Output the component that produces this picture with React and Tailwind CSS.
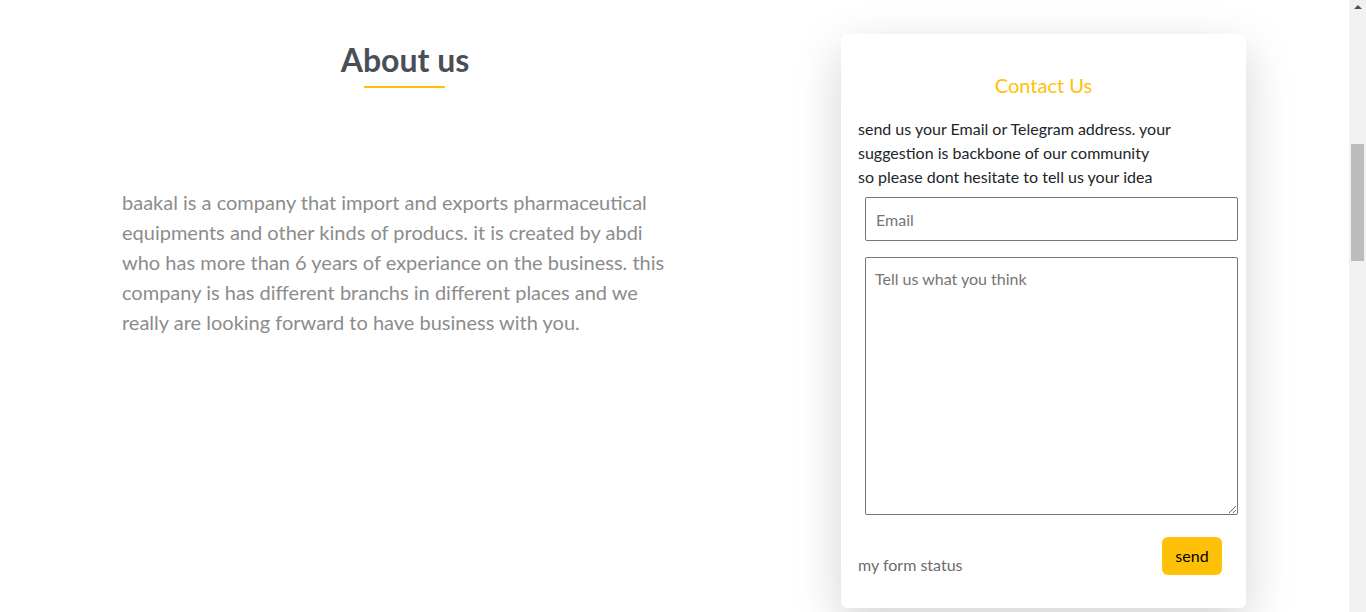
import React from 'react';

const font = { fontFamily: 'Lato, "Noto Sans", sans-serif' };

const ContactCard = () => (
  <div className="ml-[153px] mt-[34px] w-[405px] h-[574px] bg-white rounded-md shadow-[0_16px_48px_rgba(0,0,0,0.175)] px-[17px] pt-[36px]">
    <h2 className="text-center text-[20px] leading-[30px] text-[#ffc107]">Contact Us</h2>
    <p className="mt-[17px] text-[16px] leading-[24px] text-[#212529]">
      send us your Email or Telegram address. your
      <br />
      suggestion is backbone of our community
      <br />
      so please dont hesitate to tell us your idea
    </p>
    <input
      type="email"
      placeholder="Email"
      className="block mt-[8px] ml-[7px] w-[373px] h-[44px] border border-[#767676] rounded-[2px] px-[10px] text-[16px] placeholder:text-[#757575] outline-none"
    />
    <textarea
      placeholder="Tell us what you think"
      className="block mt-[16px] ml-[7px] w-[373px] h-[258px] border border-[#767676] rounded-[2px] px-[9px] pt-[9px] text-[16px] placeholder:text-[#757575] outline-none"
    />
    <div className="mt-[22px] flex justify-between items-start pr-[7px]">
      <span className="mt-[16px] text-[16px] leading-[24px] text-[#6c6c6c]">my form status</span>
      <button className="w-[60px] h-[38px] bg-[#ffc107] rounded-md text-[16px] text-black">send</button>
    </div>
  </div>
);

const App = () => {
  return (
    <div className="flex w-[1366px] h-[612px] overflow-hidden bg-white" style={font}>
      <div className="flex flex-1 items-start">
        <div className="ml-[122px] w-[566px]">
          <h1 className="pt-[40px] text-center text-[32px] leading-[40px] font-bold text-[#4a4f57]">About us</h1>
          <div className="mt-[6px] ml-[242px] w-[81px] h-[2px] bg-[#ffc107]" />
          <p className="mt-[99px] w-[555px] text-[20px] leading-[30px] text-[#8c8c8c]">
            baakal is a company that import and exports pharmaceutical equipments and other kinds of producs. it is created by abdi who has more than 6 years of experiance on the business. this company is has different branchs in different places and we really are looking forward to have business with you.
          </p>
        </div>
        <ContactCard />
      </div>
      <div className="w-[17px] h-full bg-[#f1f1f1] flex flex-col items-center">
        <div className="mt-[5px] w-0 h-0 border-l-[4px] border-r-[4px] border-b-[4px] border-l-transparent border-r-transparent border-b-[#505050]" />
        <div className="mt-[135px] w-[13px] h-[117px] bg-[#bcbcbc]" />
      </div>
    </div>
  );
};

export default App;
